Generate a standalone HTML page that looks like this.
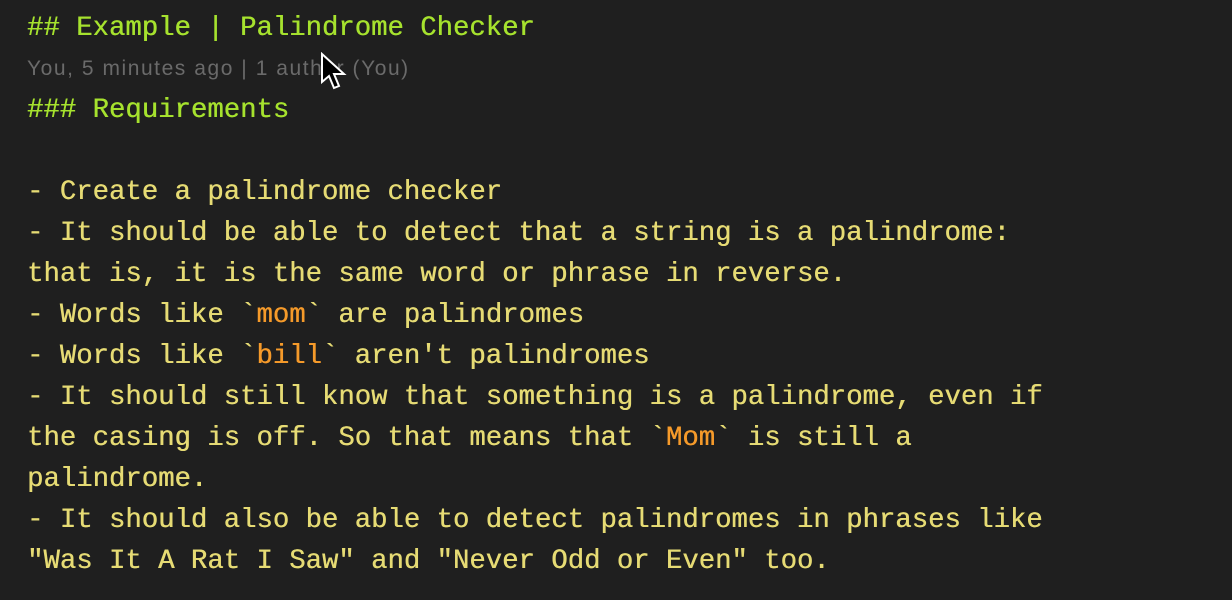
<!DOCTYPE html>
<html><head><meta charset="utf-8"><style>
html,body{margin:0;padding:0;background:#1f1f1f;width:1232px;height:600px;overflow:hidden}
.l{position:absolute;left:27px;font-family:"Liberation Mono",monospace;font-size:27.3px;line-height:41px;color:#e6db74;white-space:pre;text-shadow:0.4px 0 0 currentColor}
.g{color:#a6e22e}
.o{color:#f59a2a}
.a{position:absolute;left:27px;top:57px;font-family:"Liberation Sans",sans-serif;font-size:21px;letter-spacing:1.55px;color:#6a6a6a;white-space:pre}
</style></head><body>
<div class="l g" style="top:8px">## Example | Palindrome Checker</div>
<div class="a">You, 5 minutes ago | 1 author (You)</div>
<svg style="position:absolute;left:320px;top:52px" width="30" height="44" viewBox="0 0 30 44"><path d="M2 2 L2 30 L9 24 L14 36 L19 34 L14 22 L24 22 Z" fill="#000" stroke="#fff" stroke-width="2"/></svg>
<div class="l g" style="top:90px">### Requirements</div>
<div class="l" style="top:172px">- Create a palindrome checker</div>
<div class="l" style="top:213px">- It should be able to detect that a string is a palindrome:</div>
<div class="l" style="top:254px">that is, it is the same word or phrase in reverse.</div>
<div class="l" style="top:295px">- Words like `<span class="o">mom</span>` are palindromes</div>
<div class="l" style="top:336px">- Words like `<span class="o">bill</span>` aren't palindromes</div>
<div class="l" style="top:377px">- It should still know that something is a palindrome, even if</div>
<div class="l" style="top:418px">the casing is off. So that means that `<span class="o">Mom</span>` is still a</div>
<div class="l" style="top:459px">palindrome.</div>
<div class="l" style="top:500px">- It should also be able to detect palindromes in phrases like</div>
<div class="l" style="top:541px">"Was It A Rat I Saw" and "Never Odd or Even" too.</div>
</body></html>
